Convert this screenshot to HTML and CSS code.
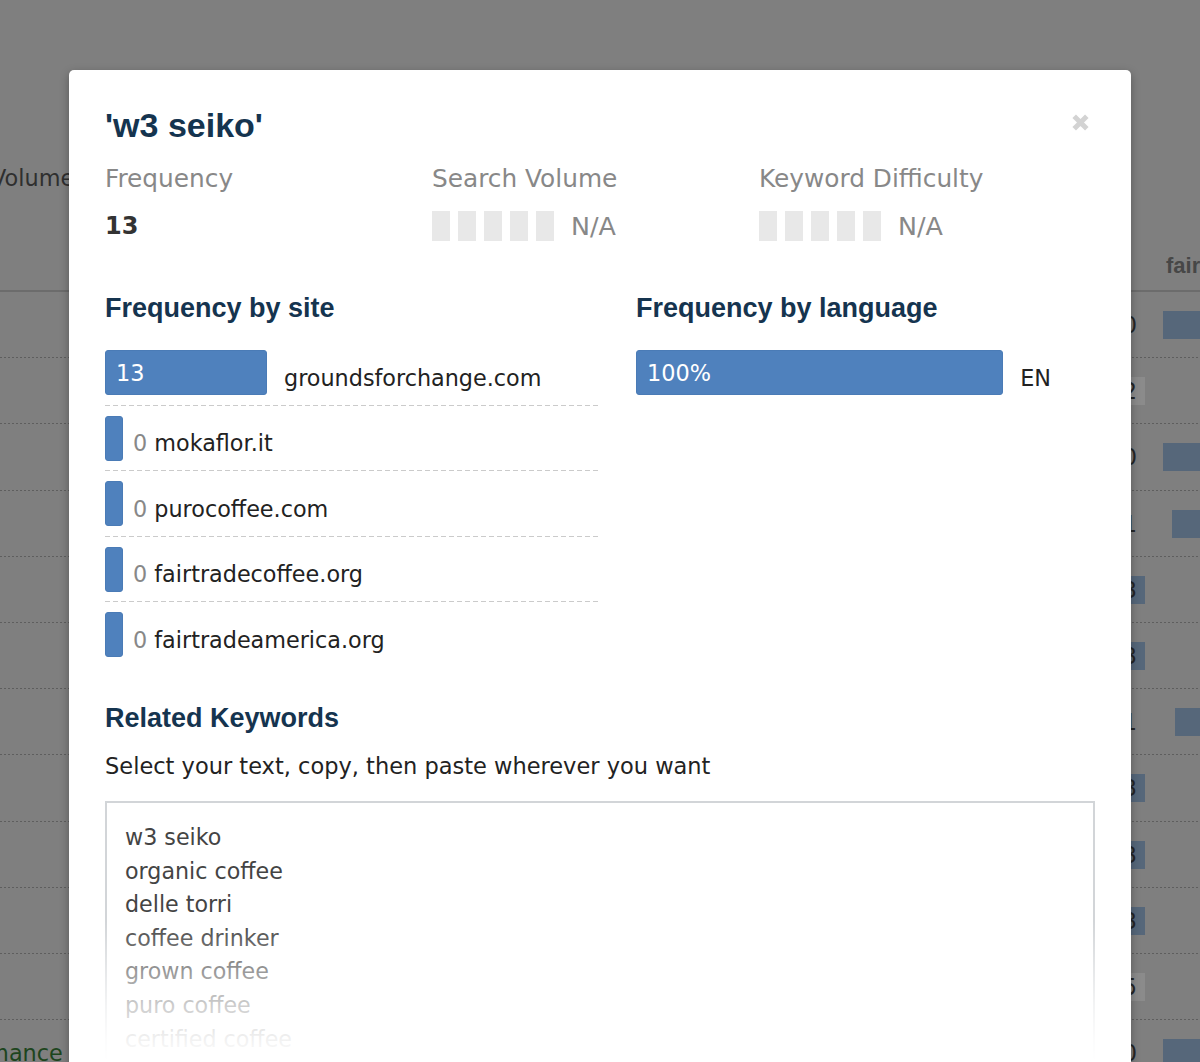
FILE: index.html
```html
<!DOCTYPE html>
<html lang="en">
<head>
<meta charset="utf-8">
<title>'w3 seiko'</title>
<link rel="stylesheet" href="styles.css">
</head>
<body>
<div class="page">
  <div class="thead">
    <div class="th-volume">Volume</div>
    <div class="th-fair">fairtradeamerica.org</div>
  </div>
  <div class="trow"><div class="td-num">0</div><div class="td-bar"><span class="bgbar"></span></div></div>
  <div class="trow"><div class="td-num gray">2</div></div>
  <div class="trow"><div class="td-num">0</div><div class="td-bar"><span class="bgbar"></span></div></div>
  <div class="trow"><div class="td-num">1</div><div class="td-bar"><span class="bgbar" style="margin-left:9px"></span></div></div>
  <div class="trow"><div class="td-num blue">3</div></div>
  <div class="trow"><div class="td-num blue">3</div></div>
  <div class="trow"><div class="td-num">1</div><div class="td-bar"><span class="bgbar" style="margin-left:12px"></span></div></div>
  <div class="trow"><div class="td-num blue">3</div></div>
  <div class="trow"><div class="td-num blue">3</div></div>
  <div class="trow"><div class="td-num blue">3</div></div>
  <div class="trow"><div class="td-num gray">5</div></div>
  <div class="trow"><div class="td-name">Performance</div><div class="td-num">0</div><div class="td-bar"><span class="bgbar"></span></div></div>
</div>

<div class="modal" role="dialog" aria-labelledby="kw-title">
  <button class="close" type="button" aria-label="Close">
    <svg width="17" height="17" viewBox="0 0 17 17" aria-hidden="true">
      <path d="M2.2 2.2 L14.8 14.8 M14.8 2.2 L2.2 14.8" stroke="#d3d3d3" stroke-width="5" fill="none"/>
    </svg>
  </button>

  <h2 class="title" id="kw-title">'w3 seiko'</h2>

  <div class="stats">
    <div class="stat">
      <div class="stat-label">Frequency</div>
      <div class="stat-value"><strong class="stat-num">13</strong></div>
    </div>
    <div class="stat">
      <div class="stat-label">Search Volume</div>
      <div class="stat-value">
        <span class="blocks"><i></i><i></i><i></i><i></i><i></i></span>
        <span class="na">N/A</span>
      </div>
    </div>
    <div class="stat">
      <div class="stat-label">Keyword Difficulty</div>
      <div class="stat-value">
        <span class="blocks"><i></i><i></i><i></i><i></i><i></i></span>
        <span class="na">N/A</span>
      </div>
    </div>
  </div>

  <div class="freq">
    <section class="col-site">
      <h3 class="heading">Frequency by site</h3>
      <ul class="site-list">
        <li class="site-row">
          <span class="bar" style="width:162px">13</span>
          <span class="site-name wide">groundsforchange.com</span>
        </li>
        <li class="site-row">
          <span class="bar zero"></span>
          <span class="site-name"><span class="count">0</span> mokaflor.it</span>
        </li>
        <li class="site-row">
          <span class="bar zero"></span>
          <span class="site-name"><span class="count">0</span> purocoffee.com</span>
        </li>
        <li class="site-row">
          <span class="bar zero"></span>
          <span class="site-name"><span class="count">0</span> fairtradecoffee.org</span>
        </li>
        <li class="site-row">
          <span class="bar zero"></span>
          <span class="site-name"><span class="count">0</span> fairtradeamerica.org</span>
        </li>
      </ul>
    </section>
    <section class="col-lang">
      <h3 class="heading">Frequency by language</h3>
      <div class="lang-row">
        <span class="bar" style="width:80%">100%</span>
        <span class="site-name wide">EN</span>
      </div>
    </section>
  </div>

  <h3 class="heading related">Related Keywords</h3>
  <p class="hint">Select your text, copy, then paste wherever you want</p>

  <div class="kw-box">
    <div class="kw-text">w3 seiko<br>organic coffee<br>delle torri<br>coffee drinker<br>grown coffee<br>puro coffee<br>certified coffee<br>fair trade<br>coffee beans</div>
  </div>
</div>
</body>
</html>
```

FILE: styles.css
```css
html, body {
  margin: 0;
  padding: 0;
}

body {
  width: 1200px;
  height: 1062px;
  overflow: hidden;
  background: #7f7f7f;
  font-family: "DejaVu Sans", Verdana, sans-serif;
  position: relative;
}

/* ---------- dimmed page behind the dialog ---------- */
.page {
  width: 1200px;
}

.thead {
  display: grid;
  grid-template-columns: 90px 1076px 1fr;
  height: 290px;
  border-bottom: 2px solid #6c6c6c;
}

.th-volume {
  grid-column: 1;
  margin-left: -9px;
  padding-top: 164px;
  font-size: 22.4px;
  line-height: 28px;
  color: #2f2f2f;
  white-space: nowrap;
}

.th-fair {
  grid-column: 3;
  align-self: end;
  padding-bottom: 11px;
  font-family: "Liberation Sans", Arial, sans-serif;
  font-weight: bold;
  font-size: 22px;
  line-height: 26px;
  color: #474747;
  white-space: nowrap;
}

.trow {
  display: grid;
  grid-template-columns: 90px 1010px 45px 1fr;
  align-items: center;
  height: 66.2px;
  box-sizing: border-box;
  background-image: linear-gradient(to right, #5e5e5e 50%, transparent 50%);
  background-size: 4px 1px;
  background-repeat: repeat-x;
  background-position: left bottom;
}

.td-name {
  grid-column: 1;
  margin-left: -79px;
  font-size: 22.4px;
  color: #1d451d;
  white-space: nowrap;
}

.td-num {
  grid-column: 3;
  height: 28px;
  line-height: 28px;
  padding-right: 8px;
  text-align: right;
  font-size: 22.4px;
  color: #262626;
}

.td-num.blue { background: #56677a; }
.td-num.gray { background: #8b8b8b; }

.td-bar {
  grid-column: 4;
  padding-left: 18px;
}

.bgbar {
  display: block;
  width: 120px;
  height: 28px;
  background: #56677a;
}

/* ---------- dialog ---------- */
.modal {
  position: absolute;
  left: 69px;
  top: 70px;
  width: 1062px;
  box-sizing: border-box;
  padding: 35px 36px 60px;
  background: #fff;
  border-radius: 5px;
  box-shadow: 0 3px 10px rgba(0, 0, 0, 0.3);
}

.close {
  position: absolute;
  top: 44px;
  right: 42px;
  width: 17px;
  height: 17px;
  padding: 0;
  border: 0;
  background: none;
  cursor: pointer;
}

.close svg {
  display: block;
}

.title {
  margin: 0;
  font-family: "Liberation Sans", Arial, sans-serif;
  font-weight: bold;
  font-size: 34px;
  line-height: 40px;
  color: #15344f;
}

.stats {
  display: grid;
  grid-template-columns: repeat(3, 327px);
  margin-top: 20px;
}

.stat-label {
  font-size: 24.8px;
  line-height: 28px;
  color: #888;
}

.stat-value {
  display: flex;
  align-items: center;
  height: 30px;
  margin-top: 18px;
}

.stat-num {
  font-size: 24px;
  font-weight: bold;
  color: #333;
}

.blocks {
  display: flex;
  gap: 8px;
}

.blocks i {
  display: block;
  width: 18px;
  height: 30px;
  background: #e8e8e8;
}

.na {
  margin-left: 17px;
  font-size: 25.4px;
  color: #888;
}

.freq {
  display: grid;
  grid-template-columns: 495px 1fr;
  column-gap: 36px;
  margin-top: 51px;
}

.heading {
  margin: 0;
  font-family: "Liberation Sans", Arial, sans-serif;
  font-weight: bold;
  font-size: 27px;
  line-height: 32px;
  color: #15344f;
}

.site-list {
  list-style: none;
  margin: 26px 0 0;
  padding: 0;
}

.site-row {
  display: flex;
  align-items: center;
  padding: 10px 0 10.5px;
  background-image: linear-gradient(to right, #cbcbcb 5px, transparent 5px);
  background-size: 8px 1px;
  background-repeat: repeat-x;
  background-position: left bottom;
}

.site-row:first-child {
  padding-top: 0;
}

.site-row:last-child {
  padding-bottom: 0;
  background: none;
}

.bar {
  display: flex;
  align-items: center;
  box-sizing: border-box;
  height: 45px;
  padding-left: 10px;
  background: #4f81bd;
  border: 1px solid #4a7bb6;
  border-radius: 3px;
  color: #fff;
  font-size: 22.4px;
  white-space: nowrap;
  flex-shrink: 0;
}

.bar.zero {
  width: 18px;
  padding-left: 0;
}

.site-name {
  margin-top: 10px;
  margin-left: 10px;
  font-size: 22.3px;
  color: #222;
  white-space: nowrap;
}

.site-name.wide {
  margin-left: 17px;
}

.count {
  color: #888;
}

.lang-row {
  display: flex;
  align-items: center;
  margin-top: 26px;
}

.related {
  margin-top: 45px;
}

.hint {
  margin: 17px 0 0;
  font-size: 22.5px;
  line-height: 30px;
  color: #222;
}

.kw-box {
  position: relative;
  margin-top: 20px;
  height: 330px;
  box-sizing: border-box;
  border: 2px solid #d2d5d8;
  padding: 18px 18px;
}

.kw-box::after {
  content: "";
  position: absolute;
  left: -2px;
  right: -2px;
  top: 118px;
  height: 240px;
  background: linear-gradient(to bottom,
    rgba(255, 255, 255, 0) 0px,
    rgba(255, 255, 255, 0.45) 50px,
    rgba(255, 255, 255, 0.73) 84px,
    rgba(255, 255, 255, 0.92) 117px,
    #fff 140px);
}

.kw-text {
  font-size: 22.2px;
  line-height: 33.6px;
  color: #444;
}
```
